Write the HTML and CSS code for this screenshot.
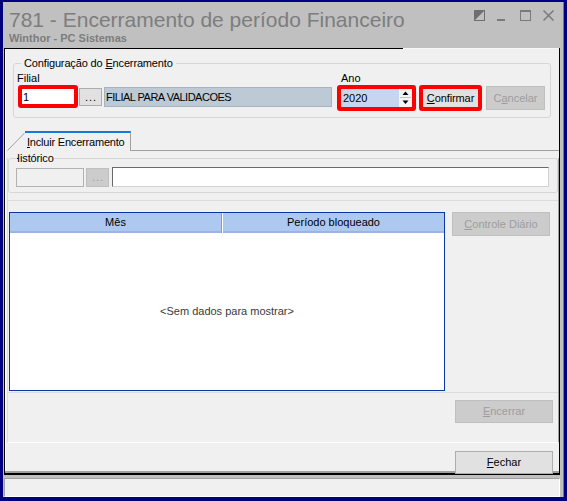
FILE: index.html
```html
<!DOCTYPE html>
<html lang="pt-BR">
<head>
<meta charset="utf-8">
<title>781 - Encerramento de período Financeiro</title>
<link rel="stylesheet" href="styles.css">
</head>
<body>
<div class="window">
  <div class="frame">
    <header class="titlebar">
      <div class="title-text">
        <div class="title">781 - Encerramento de período Financeiro</div>
        <div class="subtitle">Winthor - PC Sistemas</div>
      </div>
      <div class="wctl">
        <svg width="12" height="12" viewBox="0 0 12 12"><rect x="0.5" y="0.5" width="10" height="10" fill="none" stroke="#6e6e6e"/><polygon points="0,0 11,0 0,11" fill="#6e6e6e"/></svg>
        <svg width="12" height="12" viewBox="0 0 12 12"><rect x="0" y="9" width="8" height="2" fill="#7a7a7a"/></svg>
        <svg width="12" height="12" viewBox="0 0 12 12"><rect x="0.5" y="0.5" width="10" height="10" fill="none" stroke="#7a7a7a"/><rect x="0" y="0" width="11" height="2" fill="#7a7a7a"/></svg>
        <svg width="12" height="12" viewBox="0 0 12 12"><path d="M0.5 0.5 L10.5 10.5 M10.5 0.5 L0.5 10.5" stroke="#7a7a7a" stroke-width="1.5"/></svg>
      </div>
    </header>

    <main class="client">
      <div class="client-edge"></div>

      <section class="group cfg">
        <div class="group-title">Configuração do <u>E</u>ncerramento</div>
        <div class="cfg-row">
          <div class="col">
            <div class="lbl lbl-filial">Filial</div>
            <div class="ctrl-row">
              <div class="hl hl-filial"><div class="edit">1</div></div>
              <div class="btn btn-dots">...</div>
              <div class="desc">FILIAL PARA VALIDACOES</div>
            </div>
          </div>
          <div class="col col-ano">
            <div class="lbl lbl-ano">Ano</div>
            <div class="hl hl-ano">
              <div class="spin">
                <span class="spin-val">2020</span>
                <svg class="spin-btns" width="13" height="18" viewBox="0 0 13 18">
                  <rect x="0" y="0" width="13" height="18" fill="#f4f4f4"/>
                  <line x1="1" y1="8.5" x2="12" y2="8.5" stroke="#c4c4c4"/>
                  <polygon points="3.5,6 9.5,6 6.5,2.5" fill="#000"/>
                  <polygon points="3.5,11.5 9.5,11.5 6.5,15" fill="#000"/>
                </svg>
              </div>
            </div>
          </div>
          <div class="col col-conf">
            <div class="lbl"></div>
            <div class="hl hl-conf"><div class="btn btn-conf"><span><u>C</u>onfirmar</span></div></div>
          </div>
          <div class="btn btn-dis btn-cancel"><span>C<u>a</u>ncelar</span></div>
        </div>
      </section>

      <nav class="tabs">
        <svg class="tab-slant" width="18" height="20" viewBox="0 0 18 20"><line x1="0.5" y1="19.5" x2="17.5" y2="2" stroke="#a0a0a0"/></svg>
        <div class="tab"><u>I</u>ncluir Encerramento</div>
        <div class="tab-fill"></div>
      </nav>

      <section class="page">
        <div class="group hist">
          <div class="group-title hist-title"><span class="clip"><span class="clip-in">H</span></span>istórico</div>
          <div class="hist-row">
            <div class="edit-dis"></div>
            <div class="btn btn-dis btn-dots btn-dots-dis">...</div>
            <div class="edit-white"></div>
          </div>
        </div>

        <div class="grid-panel">
          <div class="grid">
            <div class="grid-head">
              <div class="gh gh-mes">Mês</div>
              <div class="gh gh-per">Período bloqueado</div>
            </div>
            <div class="grid-body">&lt;Sem dados para mostrar&gt;</div>
          </div>
          <div class="btn btn-dis btn-ctrl"><span><u>C</u>ontrole Diário</span></div>
        </div>

        <div class="page-foot">
          <div class="btn btn-dis btn-wide"><span><u>E</u>ncerrar</span></div>
        </div>
      </section>

      <div class="client-foot">
        <div class="btn btn-wide btn-close"><span><u>F</u>echar</span></div>
      </div>
    </main>

    <footer class="status"></footer>
  </div>
</div>
</body>
</html>
```

FILE: styles.css
```css
* {
  box-sizing: border-box;
}

html,
body {
  margin: 0;
  padding: 0;
}

body {
  width: 567px;
  height: 501px;
  overflow: hidden;
  font: 11px/13px "Liberation Sans", Arial, sans-serif;
  color: #000;
}

u {
  text-decoration: underline;
  text-underline-offset: 1px;
}

/* window chrome */
.window {
  width: 567px;
  height: 501px;
  background: #00007f;
  padding: 2px 3px 4px 3px;
}

.frame {
  height: 100%;
  background: #c0c0c0;
  border-right: 1px solid #3f86d8;
  padding: 0 3px 0 1px;
  display: flex;
  flex-direction: column;
}

.titlebar {
  height: 46px;
  flex: none;
  display: flex;
  padding: 6px 5px 0 5px;
  color: #7d7d7d;
}

.title {
  font-size: 21px;
  line-height: 24px;
}

.subtitle {
  font-weight: bold;
  font-size: 11px;
  line-height: 13px;
}

.wctl {
  margin-left: auto;
  display: flex;
  gap: 11px;
  padding-top: 2px;
}

/* client area */
.client {
  height: 427px;
  flex: none;
  background: #f0f0f0;
  border-left: 1px solid #000;
  border-right: 1px solid #000;
  border-bottom: 2px solid #000;
  box-shadow: inset 0 -2px 0 #a0a0a0, inset 1px 0 0 #fff;
}

.client-edge {
  height: 1px;
  background: linear-gradient(90deg, #000 0 398px, #f7f7f7 398px);
}

.status {
  flex: none;
  margin-top: 3px;
  height: 19px;
  background: #f0f0f0;
  border-top: 1px solid #a0a0a0;
  border-left: 1px solid #a0a0a0;
  border-bottom: 1px solid #fff;
  border-right: 1px solid #fff;
}

/* group boxes */
.group {
  border: 1px solid #d6d6d6;
  border-radius: 3px;
}

.group-title {
  width: max-content;
  margin: -7px 0 0 7px;
  padding: 0 3px;
  background: #f0f0f0;
  letter-spacing: -0.15px;
  white-space: nowrap;
}

.cfg {
  margin: 14px 0 0 8px;
  width: 538px;
  height: 55px;
}

.cfg-row {
  display: flex;
  align-items: flex-start;
  margin-top: 2px;
  padding-left: 4px;
}

.col {
  display: flex;
  flex-direction: column;
}

.lbl {
  height: 13px;
  line-height: 13px;
}

.lbl-filial {
  margin-left: -1px;
}

.lbl-ano {
  padding-left: 4px;
}

.col-ano {
  margin-left: 5px;
}

.col-conf {
  margin-left: 3px;
}

.ctrl-row {
  display: flex;
  align-items: flex-start;
}

/* red highlight frames */
.hl {
  border: 4px solid #f00;
  border-radius: 3px;
}

.hl-filial {
  width: 60px;
  height: 23px;
}

.hl-ano {
  width: 79px;
  height: 26px;
}

.hl-conf {
  width: 63px;
  height: 26px;
}

.edit {
  height: 100%;
  background: #fff;
  padding-left: 1px;
  line-height: 16px;
}

.desc {
  width: 228px;
  height: 20px;
  margin: 2px 0 0 2px;
  background: #bdcad6;
  border: 1px solid #a7b3bf;
  padding-left: 1px;
  line-height: 18px;
  letter-spacing: -0.5px;
  white-space: nowrap;
}

.spin {
  display: flex;
  height: 100%;
  background: #c6d6ef;
}

.spin-val {
  flex: 1;
  padding-left: 2px;
  line-height: 18px;
}

.spin-btns {
  display: block;
  flex: none;
}

/* buttons */
.btn {
  display: flex;
  align-items: center;
  justify-content: center;
  background: #e1e1e1;
  border: 1px solid #adadad;
  white-space: nowrap;
}

.btn-dis {
  background: #cccccc;
  border-color: #bfbfbf;
  color: #9d9d9d;
}

.btn-dots {
  width: 23px;
  height: 18px;
  margin: 3px 0 0 1px;
  letter-spacing: 1px;
  padding-left: 1px;
}

.btn-conf {
  height: 100%;
  border-color: #e1e1e1;
  letter-spacing: -0.1px;
}

.btn-cancel {
  width: 59px;
  height: 24px;
  margin: 14px 0 0 4px;
}

.btn-wide {
  width: 98px;
  height: 23px;
}

.btn-close {
  background: #e1e1e1;
}

/* tab strip */
.tabs {
  display: flex;
  margin: 13px 0 0 2px;
  width: 552px;
  height: 20px;
}

.tab-slant {
  display: block;
  flex: none;
}

.tab {
  width: 106px;
  height: 20px;
  flex: none;
  border-top: 2px solid #1878d6;
  border-right: 1px solid #a0a0a0;
  padding: 2px 0 0 2px;
  line-height: 15px;
  letter-spacing: -0.2px;
  white-space: nowrap;
}

.tab-fill {
  flex: 1;
  border-bottom: 1px solid #a0a0a0;
}

/* tab page */
.page {
  margin-left: 2px;
  width: 552px;
  height: 285px;
  border-left: 1px solid #dcdcdc;
  border-right: 1px solid #a0a0a0;
  border-bottom: 1px solid #fff;
}

.hist {
  margin-top: 7px;
  height: 35px;
}

.hist-title {
  margin-left: 8px;
  padding: 0;
}

.clip {
  display: inline-block;
  vertical-align: top;
  width: 3px;
  overflow: hidden;
  white-space: nowrap;
}

.clip-in {
  margin-left: -5px;
}

.hist-row {
  display: flex;
  align-items: flex-start;
  margin-top: 3px;
  padding-left: 7px;
}

.edit-dis {
  width: 68px;
  height: 19px;
  background: #f0f0f0;
  border: 1px solid #b2b2b2;
}

.btn-dots-dis {
  height: 19px;
  margin: 0 0 0 2px;
}

.edit-white {
  width: 437px;
  height: 20px;
  margin: -1px 0 0 3px;
  background: #fff;
  border: 1px solid #d2d2d2;
  border-top-color: #6a6a6a;
  border-left-color: #6a6a6a;
}

/* data grid area */
.grid-panel {
  margin-top: 7px;
  height: 193px;
  border-top: 1px solid #dcdcdc;
  border-bottom: 1px solid #dcdcdc;
  display: flex;
  align-items: flex-start;
  padding-top: 11px;
}

.grid {
  margin-left: 1px;
  width: 436px;
  height: 179px;
  border: 1px solid #0a36a6;
  background: #fff;
  display: flex;
  flex-direction: column;
}

.grid-head {
  height: 20px;
  flex: none;
  display: flex;
  background: #adc9ef;
  box-shadow: inset 0 -2px 0 #9ab6e0;
}

.gh {
  line-height: 19px;
  text-align: center;
  white-space: nowrap;
}

.gh-mes {
  width: 212px;
  border-right: 1px solid #7f9fd0;
}

.gh-per {
  flex: 1;
  border-left: 1px solid #fff;
}

.grid-body {
  flex: 1;
  display: flex;
  align-items: center;
  justify-content: center;
  color: #3a3a3a;
}

.btn-ctrl {
  width: 98px;
  height: 24px;
  margin-left: 7px;
}

.page-foot {
  padding: 7px 0 0 447px;
}

.client-foot {
  padding: 8px 0 0 450px;
}
```
